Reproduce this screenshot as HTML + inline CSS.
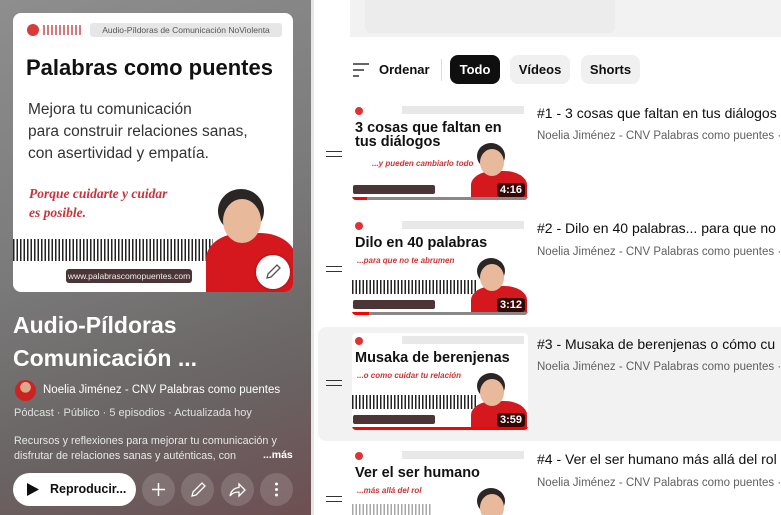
<!DOCTYPE html>
<html><head><meta charset="utf-8"><style>
*{margin:0;padding:0;box-sizing:border-box}
html,body{width:781px;height:515px;overflow:hidden}
body{background:#fff;font-family:"Liberation Sans",sans-serif;position:relative}
.left{position:absolute;left:0;top:0;width:314px;height:515px;background:linear-gradient(160deg,#8e8e8e 0%,#7a7a7a 45%,#6a6464 75%,#6e4f52 100%)}
.left:after{content:"";position:absolute;right:0;top:0;width:3px;height:515px;background:#e6e6e6}
.cover{position:absolute;left:13px;top:13px;width:280px;height:279px;background:#fff;border-radius:8px;overflow:hidden}
.a{position:absolute}
.wave{background:repeating-linear-gradient(90deg,#222 0 1.5px,transparent 1.5px 3.5px)}
.person .hair{position:absolute;background:#2b2624;border-radius:50%}
.person .face{position:absolute;background:#e9b99b;border-radius:50%}
.person .body{position:absolute;background:#d5181e;border-radius:40% 40% 0 0}
.t1{color:#fff;font-weight:bold;font-size:23px;line-height:33px}
.btn{position:absolute;top:473px;width:33px;height:33px;border-radius:50%;background:rgba(255,255,255,.15)}
.chip{position:absolute;top:55px;height:29px;border-radius:8px;background:#f0f0f0;font-size:13px;font-weight:bold;color:#0f0f0f;line-height:29px;text-align:center}
.thumb{position:absolute;left:352px;width:176px;height:97px;background:#fff;overflow:hidden;border-radius:4px}
.title{position:absolute;left:537px;font-size:14px;color:#0f0f0f;white-space:nowrap}
.sub{position:absolute;left:537px;font-size:11.5px;color:#606060;white-space:nowrap}
.handle{position:absolute;left:326px;width:16px;height:6px;border-top:1.5px solid #333;border-bottom:1.5px solid #333}
.dur{position:absolute;right:3px;bottom:3px;background:rgba(0,0,0,.75);color:#fff;font-size:11px;font-weight:bold;padding:1px 3px;border-radius:3px}
</style></head><body>
<div class="left">
 <div class="cover">
  <div class="a" style="left:14px;top:11px;width:12px;height:12px;border-radius:50%;background:#d93a3a"></div>
  <div class="a" style="left:30px;top:12px;width:38px;height:10px;background:repeating-linear-gradient(90deg,#d87878 0 2px,transparent 2px 4px)"></div>
  <div class="a" style="left:77px;top:10px;width:192px;height:14px;background:#e6e6e6;border-radius:3px;font-size:8.5px;color:#555;line-height:14px;text-align:center">Audio-Píldoras de Comunicación NoViolenta</div>
  <div class="a" style="left:13px;top:42px;font-size:22px;font-weight:bold;color:#111;white-space:nowrap">Palabras como puentes</div>
  <div class="a" style="left:15px;top:86px;font-size:15.5px;color:#333;line-height:22px;white-space:nowrap">Mejora tu comunicación<br>para construir relaciones sanas,<br>con asertividad y empatía.</div>
  <div class="a" style="left:16px;top:171px;font-size:13.5px;color:#c8323b;font-style:italic;font-weight:bold;line-height:19px;font-family:'Liberation Serif',serif">Porque cuidarte y cuidar<br>es posible.</div>
  <div class="a wave" style="left:0;top:226px;width:200px;height:22px"></div>
  <div class="a person" style="left:185px;top:160px;width:95px;height:120px">
   <div class="body" style="left:8px;top:60px;width:90px;height:65px"></div>
   <div class="hair" style="left:20px;top:16px;width:46px;height:44px"></div>
   <div class="face" style="left:25px;top:26px;width:38px;height:44px"></div>
  </div>
  <div class="a" style="left:53px;top:256px;width:126px;height:14px;background:#4b3536;border-radius:3px;color:#eee;font-size:8.5px;line-height:14px;text-align:center">www.palabrascomopuentes.com</div>
  <div class="a" style="left:243px;top:242px;width:34px;height:34px;border-radius:50%;background:#fff;box-shadow:0 0 3px rgba(0,0,0,.3)"><svg width="34" height="34" viewBox="0 0 34 34"><path d="M11 23 L12 19 L21 10 L24 13 L15 22 Z" fill="none" stroke="#555" stroke-width="1.3"/></svg></div>
 </div>
 <div class="a t1" style="left:13px;top:309px">Audio-Píldoras<br>Comunicación ...</div>
 <div class="a" style="left:15px;top:380px;width:21px;height:21px;border-radius:50%;background:radial-gradient(circle at 50% 35%,#d9a98c 0 30%,#c22 32%)"></div>
 <div class="a" style="left:43px;top:384px;font-size:11.5px;color:#fff">Noelia Jiménez - CNV Palabras como puentes</div>
 <div class="a" style="left:14px;top:407px;font-size:11px;color:#e0e0e0">Pódcast · Público · 5 episodios · Actualizada hoy</div>
 <div class="a" style="left:14px;top:434px;font-size:10.8px;color:#e6e6e6;line-height:15px;white-space:nowrap">Recursos y reflexiones para mejorar tu comunicación y<br>disfrutar de relaciones sanas y auténticas, con</div>
 <div class="a" style="left:263px;top:449px;font-size:10.5px;color:#fff;font-weight:bold">...más</div>
 <div class="a" style="left:13px;top:473px;width:123px;height:33px;border-radius:17px;background:#fff"><svg class="a" style="left:14px;top:10px" width="12" height="13"><path d="M0 0L12 6.5L0 13Z" fill="#0f0f0f"/></svg><span class="a" style="left:37px;top:9px;font-size:12.5px;color:#0f0f0f;font-weight:bold">Reproducir...</span></div>
 <div class="btn" style="left:142px"><svg width="33" height="33"><path d="M16.5 10v13M10 16.5h13" stroke="#fff" stroke-width="1.5"/></svg></div>
 <div class="btn" style="left:181px"><svg width="33" height="33"><path d="M11 23 L12 19 L21 10 L24 13 L15 22 Z" fill="none" stroke="#fff" stroke-width="1.3"/></svg></div>
 <div class="btn" style="left:221px"><svg width="33" height="33"><path d="M18 11l6 6-6 6v-4c-4 0-7 1-9 4 1-5 4-8 9-8.5z" fill="none" stroke="#fff" stroke-width="1.3"/></svg></div>
 <div class="btn" style="left:260px"><svg width="33" height="33"><circle cx="16.5" cy="11" r="1.5" fill="#fff"/><circle cx="16.5" cy="16.5" r="1.5" fill="#fff"/><circle cx="16.5" cy="22" r="1.5" fill="#fff"/></svg></div>
</div>

<div class="a" style="left:350px;top:0;width:431px;height:37px;background:#f2f2f2"></div>
<div class="a" style="left:365px;top:0;width:250px;height:33px;background:#ececec;border-radius:0 0 6px 6px"></div>
<svg class="a" style="left:352px;top:62px" width="18" height="16"><path d="M1 2h16M1 8h11M1 14h6" stroke="#333" stroke-width="1.6"/></svg>
<div class="a" style="left:379px;top:62px;font-size:13px;font-weight:bold;color:#0f0f0f">Ordenar</div>
<div class="a" style="left:441px;top:59px;width:1px;height:22px;background:#ddd"></div>
<div class="chip" style="left:450px;width:50px;background:#0f0f0f;color:#fff">Todo</div>
<div class="chip" style="left:510px;width:60px">Vídeos</div>
<div class="chip" style="left:581px;width:59px">Shorts</div>

<div class="a" style="left:318px;top:327px;width:463px;height:114px;background:#f2f2f2;border-radius:8px 0 0 8px"></div>

<div class="handle" style="top:151px"></div>
<div class="handle" style="top:266px"></div>
<div class="handle" style="top:380px"></div>
<div class="handle" style="top:496px"></div>

<div class="thumb" style="top:103px">
 <div class="a" style="left:3px;top:4px;width:8px;height:8px;border-radius:50%;background:#d33"></div>
 <div class="a" style="left:50px;top:3px;width:122px;height:8px;background:#e8e8e8"></div>
 <div class="a" style="left:3px;top:18px;font-size:14.5px;font-weight:bold;color:#111;line-height:14px">3 cosas que faltan en<br>tus diálogos</div>
 <div class="a" style="left:20px;top:56px;font-size:8px;color:#c33;font-style:italic;font-weight:bold">...y pueden cambiarlo todo</div>
 <div class="a person" style="left:115px;top:38px;width:60px;height:60px"><div class="body" style="left:4px;top:30px;width:56px;height:35px"></div><div class="hair" style="left:10px;top:2px;width:28px;height:26px"></div><div class="face" style="left:13px;top:8px;width:24px;height:27px"></div></div>
 <div class="a" style="left:1px;top:82px;width:82px;height:9px;background:#4b3536;border-radius:2px"></div>
 <div class="dur">4:16</div>
 <div class="a" style="left:0;bottom:0;width:176px;height:3px;background:#888"></div><div class="a" style="left:0;bottom:0;width:15px;height:3px;background:#f00"></div>
</div>
<div class="title" style="top:105px">#1 - 3 cosas que faltan en tus diálogos</div>
<div class="sub" style="top:130px">Noelia Jiménez - CNV Palabras como puentes · 202</div>

<div class="thumb" style="top:218px">
 <div class="a" style="left:3px;top:4px;width:8px;height:8px;border-radius:50%;background:#d33"></div>
 <div class="a" style="left:50px;top:3px;width:122px;height:8px;background:#e8e8e8"></div>
 <div class="a" style="left:3px;top:17px;font-size:14.5px;font-weight:bold;color:#111">Dilo en 40 palabras</div>
 <div class="a" style="left:5px;top:38px;font-size:8px;color:#c33;font-style:italic;font-weight:bold">...para que no te abrumen</div>
 <div class="a wave" style="left:0;top:62px;width:125px;height:14px"></div>
 <div class="a person" style="left:115px;top:38px;width:60px;height:60px"><div class="body" style="left:4px;top:30px;width:56px;height:35px"></div><div class="hair" style="left:10px;top:2px;width:28px;height:26px"></div><div class="face" style="left:13px;top:8px;width:24px;height:27px"></div></div>
 <div class="a" style="left:1px;top:82px;width:82px;height:9px;background:#4b3536;border-radius:2px"></div>
 <div class="dur">3:12</div>
 <div class="a" style="left:0;bottom:0;width:176px;height:3px;background:#888"></div><div class="a" style="left:0;bottom:0;width:17px;height:3px;background:#f00"></div>
</div>
<div class="title" style="top:220px">#2 - Dilo en 40 palabras... para que no</div>
<div class="sub" style="top:246px">Noelia Jiménez - CNV Palabras como puentes · 39</div>

<div class="thumb" style="top:333px">
 <div class="a" style="left:3px;top:4px;width:8px;height:8px;border-radius:50%;background:#d33"></div>
 <div class="a" style="left:50px;top:3px;width:122px;height:8px;background:#e8e8e8"></div>
 <div class="a" style="left:3px;top:17px;font-size:14.5px;font-weight:bold;color:#111">Musaka de berenjenas</div>
 <div class="a" style="left:5px;top:38px;font-size:8px;color:#c33;font-style:italic;font-weight:bold">...o como cuidar tu relación</div>
 <div class="a wave" style="left:0;top:62px;width:125px;height:14px"></div>
 <div class="a person" style="left:115px;top:38px;width:60px;height:60px"><div class="body" style="left:4px;top:30px;width:56px;height:35px"></div><div class="hair" style="left:10px;top:2px;width:28px;height:26px"></div><div class="face" style="left:13px;top:8px;width:24px;height:27px"></div></div>
 <div class="a" style="left:1px;top:82px;width:82px;height:9px;background:#4b3536;border-radius:2px"></div>
 <div class="dur">3:59</div>
 <div class="a" style="left:0;bottom:0;width:176px;height:3px;background:#f00"></div>
</div>
<div class="title" style="top:336px">#3 - Musaka de berenjenas o cómo cu</div>
<div class="sub" style="top:361px">Noelia Jiménez - CNV Palabras como puentes · 18</div>

<div class="thumb" style="top:448px;height:67px;border-radius:4px 4px 0 0">
 <div class="a" style="left:3px;top:4px;width:8px;height:8px;border-radius:50%;background:#d33"></div>
 <div class="a" style="left:50px;top:3px;width:122px;height:8px;background:#e8e8e8"></div>
 <div class="a" style="left:3px;top:17px;font-size:14.5px;font-weight:bold;color:#111">Ver el ser humano</div>
 <div class="a" style="left:5px;top:38px;font-size:8px;color:#c33;font-style:italic;font-weight:bold">...más allá del rol</div>
 <div class="a wave" style="left:0;top:56px;width:80px;height:11px;opacity:.4"></div>
 <div class="a person" style="left:115px;top:38px;width:60px;height:29px;overflow:hidden"><div class="body" style="left:4px;top:30px;width:56px;height:35px"></div><div class="hair" style="left:10px;top:2px;width:28px;height:26px"></div><div class="face" style="left:13px;top:8px;width:24px;height:27px"></div></div>
</div>
<div class="title" style="top:451px">#4 - Ver el ser humano más allá del rol</div>
<div class="sub" style="top:477px">Noelia Jiménez - CNV Palabras como puentes · 0 v</div>
</body></html>
